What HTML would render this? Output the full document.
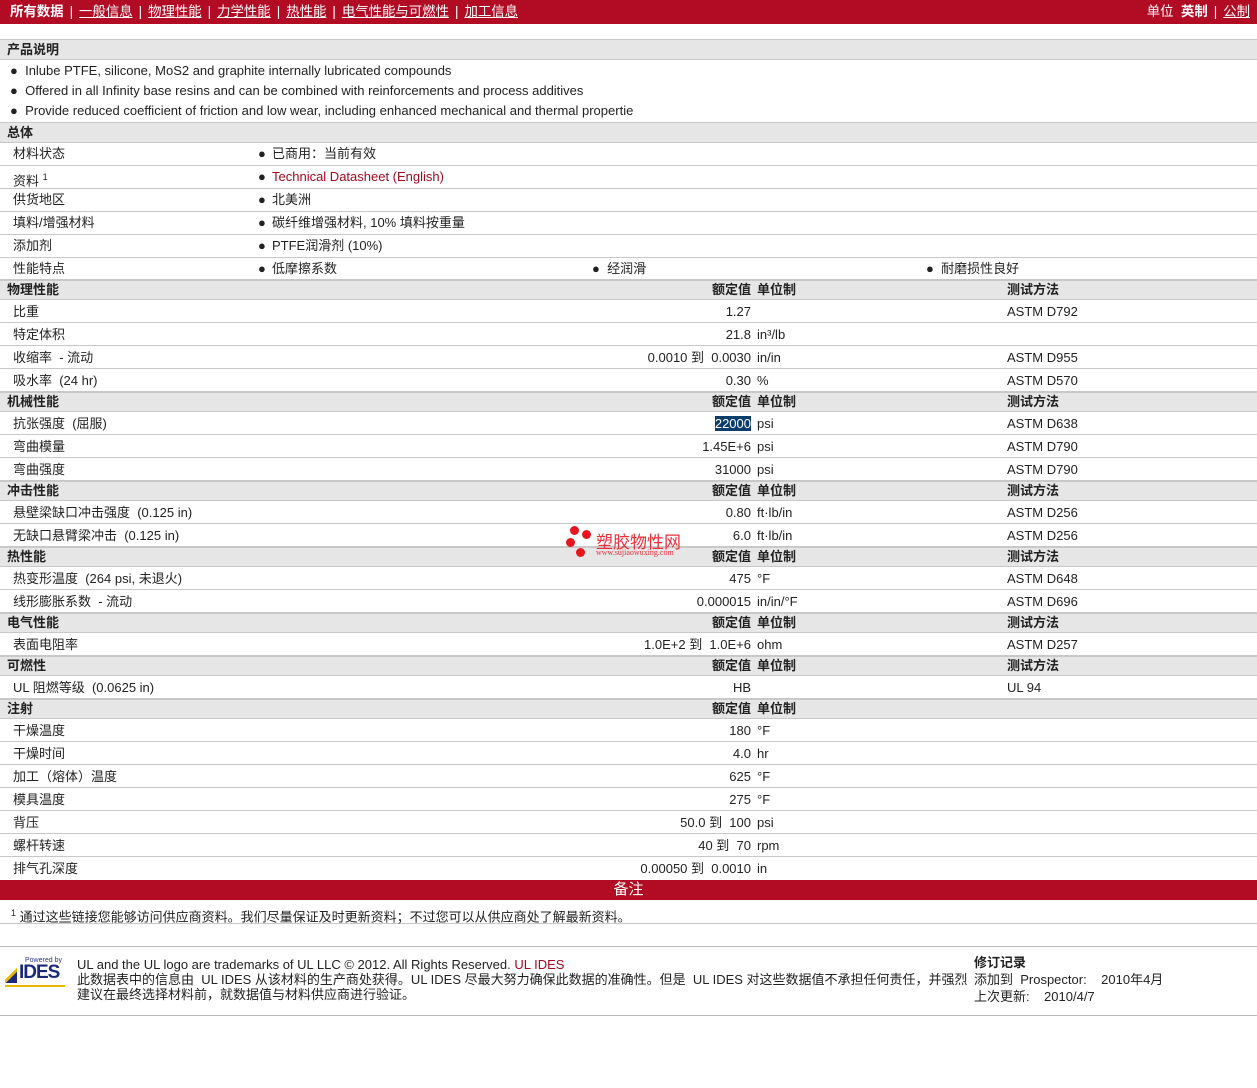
<!DOCTYPE html>
<html><head><meta charset="utf-8">
<style>
*{margin:0;padding:0;box-sizing:border-box}
body{width:1257px;height:1088px;background:#fff;position:relative;overflow:hidden;font-family:"Liberation Sans","Noto Sans CJK SC",sans-serif;font-size:13px;color:#222}
.top{position:absolute;left:0;top:0;width:1257px;height:24px;background:#b20c24;color:#fff;font-size:13.4px;line-height:24px}
.top a{color:#fff;text-decoration:underline}
.top .sep{margin:0 6px}
.r{position:absolute;left:0;width:1257px;border-bottom:1px solid #c8c8c8}
.h{background:#e6e6e6;font-weight:bold;border-top:1px solid #c8c8c8}
.r span{position:absolute;white-space:nowrap}
.v{right:506px;text-align:right}
.u{left:757px}
.m{left:1007px}
.l{left:13px}
.hl{left:7px}
.b{left:258px}.bt{left:272px}
a.red{color:#a3081d;text-decoration:none}
</style></head><body>
<div class="top"><span style="position:absolute;left:10px"><b>所有数据</b><span class="sep">|</span><a>一般信息</a><span class="sep">|</span><a>物理性能</a><span class="sep">|</span><a>力学性能</a><span class="sep">|</span><a>热性能</a><span class="sep">|</span><a>电气性能与可燃性</a><span class="sep">|</span><a>加工信息</a></span>
<span style="position:absolute;right:7px">单位 &nbsp;<b>英制</b><span class="sep">|</span><a>公制</a></span></div>

<div class="r h" style="top:39px;height:21px;line-height:19px"><span class="hl">产品说明</span></div>
<div class="r" style="top:60px;height:63px">
<span style="left:10px;top:1px;line-height:20px">●&nbsp; Inlube PTFE, silicone, MoS2 and graphite internally lubricated compounds<br>●&nbsp; Offered in all Infinity base resins and can be combined with reinforcements and process additives<br>●&nbsp; Provide reduced coefficient of friction and low wear, including enhanced mechanical and thermal propertie</span></div>

<div class="r h" style="top:122px;height:21px;line-height:19px"><span class="hl">总体</span></div>
<div class="r" style="top:143px;height:23px;line-height:22px"><span class="l">材料状态</span><span class="b">●</span><span class="bt">已商用：当前有效</span></div>
<div class="r" style="top:166px;height:23px;line-height:22px"><span class="l">资料 <sup style="font-size:9px">1</sup></span><span class="b">●</span><span class="bt"><a class="red">Technical Datasheet (English)</a></span></div>
<div class="r" style="top:189px;height:23px;line-height:22px"><span class="l">供货地区</span><span class="b">●</span><span class="bt">北美洲</span></div>
<div class="r" style="top:212px;height:23px;line-height:22px"><span class="l">填料/增强材料</span><span class="b">●</span><span class="bt">碳纤维增强材料, 10% 填料按重量</span></div>
<div class="r" style="top:235px;height:23px;line-height:22px"><span class="l">添加剂</span><span class="b">●</span><span class="bt">PTFE润滑剂 (10%)</span></div>
<div class="r" style="top:258px;height:22px;line-height:22px"><span class="l">性能特点</span><span class="b">●</span><span class="bt">低摩擦系数</span><span style="left:592px">●&nbsp; 经润滑</span><span style="left:926px">●&nbsp; 耐磨损性良好</span></div>

<div class="r h" style="top:280px;height:20px;line-height:18px"><span class="hl">物理性能</span><span class="v">额定值</span><span class="u">单位制</span><span class="m">测试方法</span></div>
<div class="r" style="top:300px;height:23px;line-height:23px"><span class="l">比重</span><span class="v">1.27</span><span class="m">ASTM D792</span></div>
<div class="r" style="top:323px;height:23px;line-height:23px"><span class="l">特定体积</span><span class="v">21.8</span><span class="u">in³/lb</span></div>
<div class="r" style="top:346px;height:23px;line-height:23px"><span class="l">收缩率 &nbsp;- 流动</span><span class="v">0.0010 到 &nbsp;0.0030</span><span class="u">in/in</span><span class="m">ASTM D955</span></div>
<div class="r" style="top:369px;height:23px;line-height:23px"><span class="l">吸水率 &nbsp;(24 hr)</span><span class="v">0.30</span><span class="u">%</span><span class="m">ASTM D570</span></div>

<div class="r h" style="top:392px;height:20px;line-height:18px"><span class="hl">机械性能</span><span class="v">额定值</span><span class="u">单位制</span><span class="m">测试方法</span></div>
<div class="r" style="top:412px;height:23px;line-height:23px"><span class="l">抗张强度 &nbsp;(屈服)</span><span class="v" style="background:#0a3d6b;color:#fff;line-height:15px;top:4px">22000</span><span class="u">psi</span><span class="m">ASTM D638</span></div>
<div class="r" style="top:435px;height:23px;line-height:23px"><span class="l">弯曲模量</span><span class="v">1.45E+6</span><span class="u">psi</span><span class="m">ASTM D790</span></div>
<div class="r" style="top:458px;height:23px;line-height:23px"><span class="l">弯曲强度</span><span class="v">31000</span><span class="u">psi</span><span class="m">ASTM D790</span></div>

<div class="r h" style="top:481px;height:20px;line-height:18px"><span class="hl">冲击性能</span><span class="v">额定值</span><span class="u">单位制</span><span class="m">测试方法</span></div>
<div class="r" style="top:501px;height:23px;line-height:23px"><span class="l">悬壁梁缺口冲击强度 &nbsp;(0.125 in)</span><span class="v">0.80</span><span class="u">ft·lb/in</span><span class="m">ASTM D256</span></div>
<div class="r" style="top:524px;height:23px;line-height:23px"><span class="l">无缺口悬臂梁冲击 &nbsp;(0.125 in)</span><span class="v">6.0</span><span class="u">ft·lb/in</span><span class="m">ASTM D256</span></div>

<div class="r h" style="top:547px;height:20px;line-height:18px"><span class="hl">热性能</span><span class="v">额定值</span><span class="u">单位制</span><span class="m">测试方法</span></div>
<div class="r" style="top:567px;height:23px;line-height:23px"><span class="l">热变形温度 &nbsp;(264 psi, 未退火)</span><span class="v">475</span><span class="u">°F</span><span class="m">ASTM D648</span></div>
<div class="r" style="top:590px;height:23px;line-height:23px"><span class="l">线形膨胀系数 &nbsp;- 流动</span><span class="v">0.000015</span><span class="u">in/in/°F</span><span class="m">ASTM D696</span></div>

<div class="r h" style="top:613px;height:20px;line-height:18px"><span class="hl">电气性能</span><span class="v">额定值</span><span class="u">单位制</span><span class="m">测试方法</span></div>
<div class="r" style="top:633px;height:23px;line-height:23px"><span class="l">表面电阻率</span><span class="v">1.0E+2 到 &nbsp;1.0E+6</span><span class="u">ohm</span><span class="m">ASTM D257</span></div>

<div class="r h" style="top:656px;height:20px;line-height:18px"><span class="hl">可燃性</span><span class="v">额定值</span><span class="u">单位制</span><span class="m">测试方法</span></div>
<div class="r" style="top:676px;height:23px;line-height:23px"><span class="l">UL 阻燃等级 &nbsp;(0.0625 in)</span><span class="v">HB</span><span class="m">UL 94</span></div>

<div class="r h" style="top:699px;height:20px;line-height:18px"><span class="hl">注射</span><span class="v">额定值</span><span class="u">单位制</span></div>
<div class="r" style="top:719px;height:23px;line-height:23px"><span class="l">干燥温度</span><span class="v">180</span><span class="u">°F</span></div>
<div class="r" style="top:742px;height:23px;line-height:23px"><span class="l">干燥时间</span><span class="v">4.0</span><span class="u">hr</span></div>
<div class="r" style="top:765px;height:23px;line-height:23px"><span class="l">加工（熔体）温度</span><span class="v">625</span><span class="u">°F</span></div>
<div class="r" style="top:788px;height:23px;line-height:23px"><span class="l">模具温度</span><span class="v">275</span><span class="u">°F</span></div>
<div class="r" style="top:811px;height:23px;line-height:23px"><span class="l">背压</span><span class="v">50.0 到 &nbsp;100</span><span class="u">psi</span></div>
<div class="r" style="top:834px;height:23px;line-height:23px"><span class="l">螺杆转速</span><span class="v">40 到 &nbsp;70</span><span class="u">rpm</span></div>
<div class="r" style="top:857px;height:23px;line-height:23px;border:none"><span class="l">排气孔深度</span><span class="v">0.00050 到 &nbsp;0.0010</span><span class="u">in</span></div>

<div style="position:absolute;left:0;top:880px;width:1257px;height:20px;background:#b20c24;color:#fff;text-align:center;font-size:15px;line-height:19px">备注</div>
<div class="r" style="top:900px;height:24px;line-height:26px"><span style="left:11px"><sup style="font-size:9px">1</sup> 通过这些链接您能够访问供应商资料。我们尽量保证及时更新资料；不过您可以从供应商处了解最新资料。</span></div>
<div style="position:absolute;left:0;top:946px;width:1257px;height:70px;border-top:1px solid #bbb;border-bottom:1px solid #bbb"></div>

<!-- watermark -->
<div style="position:absolute;left:566px;top:526px;width:130px;height:34px">
<div style="position:absolute;left:4px;top:0;width:9px;height:9px;border-radius:50%;background:#e8141e"></div>
<div style="position:absolute;left:16px;top:4px;width:9px;height:9px;border-radius:50%;background:#e8141e"></div>
<div style="position:absolute;left:0;top:12px;width:9px;height:9px;border-radius:50%;background:#e8141e"></div>
<div style="position:absolute;left:10px;top:22px;width:9px;height:9px;border-radius:50%;background:#e8141e"></div>
<span style="position:absolute;left:30px;top:2px;color:#e8303a;font-size:17px;white-space:nowrap">塑胶物性网</span>
<span style="position:absolute;left:30px;top:22px;color:#e8303a;font-size:8px;font-family:'Liberation Serif',serif;white-space:nowrap">www.sujiaowuxing.com</span>
</div>

<!-- footer -->
<div style="position:absolute;left:5px;top:957px;width:62px;height:30px">
<span style="position:absolute;left:20px;top:0;font-size:7px;color:#2a3a8a">Powered by</span>
<div style="position:absolute;left:0;top:10px;width:12px;height:16px;background:linear-gradient(135deg,#fff 45%,#e6b800 45%,#e6b800 60%,#1a2a7a 60%)"></div>
<span style="position:absolute;left:14px;top:5px;font-size:19px;font-weight:bold;color:#1a2a7a;letter-spacing:-1px">IDES</span>
<div style="position:absolute;left:0;top:28px;width:60px;height:2px;background:#e6b800"></div>
</div>
<div style="position:absolute;left:77px;top:957px;line-height:15px;width:900px">UL and the UL logo are trademarks of UL LLC © 2012. All Rights Reserved. <a class="red">UL IDES</a><br>此数据表中的信息由 &nbsp;UL IDES 从该材料的生产商处获得。UL IDES 尽最大努力确保此数据的准确性。但是 &nbsp;UL IDES 对这些数据值不承担任何责任，并强烈<br>建议在最终选择材料前，就数据值与材料供应商进行验证。</div>
<div style="position:absolute;left:974px;top:954px;line-height:17px"><b>修订记录</b><br>添加到 &nbsp;Prospector: &nbsp;&nbsp;&nbsp;2010年4月<br>上次更新: &nbsp;&nbsp;&nbsp;2010/4/7</div>
</body></html>
